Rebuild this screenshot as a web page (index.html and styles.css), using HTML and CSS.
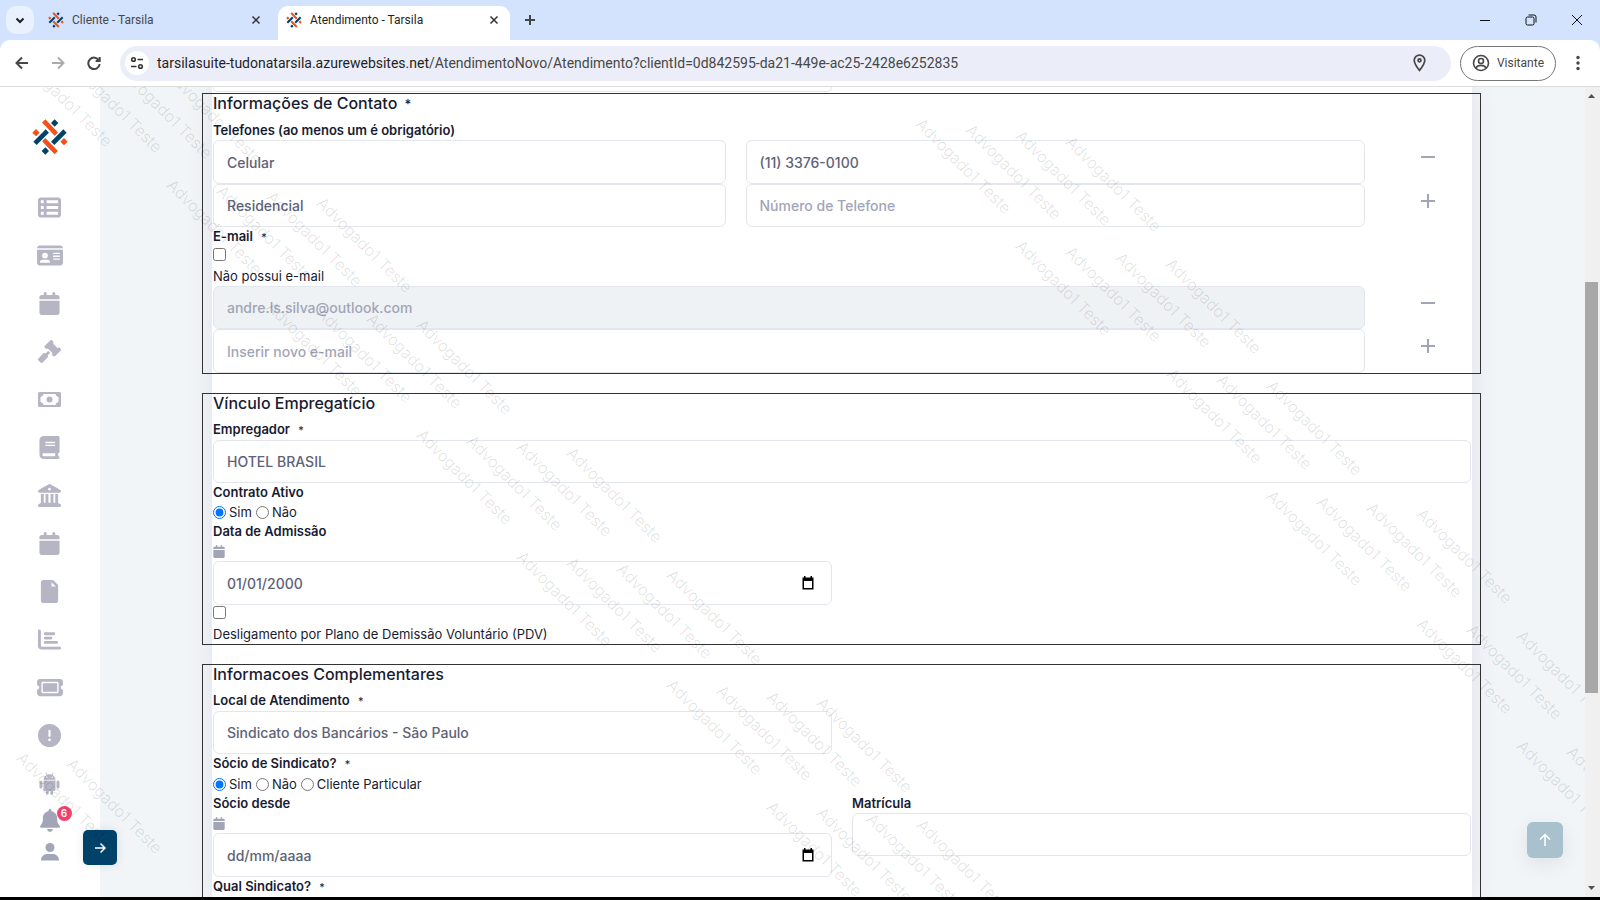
FILE: index.html
```html
<!DOCTYPE html>
<html lang="pt-BR">
<head>
<meta charset="utf-8">
<title>Atendimento - Tarsila</title>
<link rel="stylesheet" href="styles.css">
</head>
<body>
<svg class="defs" aria-hidden="true">
  <symbol id="logo" viewBox="35 28 108 108">
    <g stroke-width="14" stroke-linecap="square">
      <path class="logo-warm" d="M75 39L103 68M75 95L103 124"/>
      <path class="logo-cool" d="M49 96L76 69M102 96L129 69"/>
    </g>
    <path class="logo-cool-fill" d="M103 29l11 11-11 11-11-11zM75 113l11 11-11 11-11-11z"/>
    <path class="logo-warm-fill" d="M47 58l11 11-11 11-11-11zM131 85l11 11-11 11-11-11z"/>
  </symbol>
  <symbol id="calendar" viewBox="0 0 448 512"><path d="M96 32V64H48C21.500 64 0 85.500 0 112v48H448V112c0-26.500-21.500-48-48-48H352V32c0-17.700-14.300-32-32-32s-32 14.300-32 32V64H160V32c0-17.700-14.300-32-32-32S96 14.300 96 32zM448 192H0V464c0 26.500 21.500 48 48 48H400c26.500 0 48-21.500 48-48V192z"/></symbol>
</svg>
<div class="browser">
  <div class="tabstrip">
    <button class="tab-search" aria-label="Pesquisar guias"><svg viewBox="0 0 10 10"><path d="M1.500 3.500L5 7l3.500-3.500"/></svg></button>
    <div class="tab">
      <svg class="favicon"><use href="#logo"/></svg><span class="tab-title">Cliente - Tarsila</span>
      <button class="tab-close" aria-label="Fechar"><svg viewBox="0 0 10 10"><path d="M1.500 1.500l7 7M8.500 1.500l-7 7"/></svg></button>
    </div>
    <div class="tab tab-active">
      <svg class="favicon"><use href="#logo"/></svg><span class="tab-title">Atendimento - Tarsila</span>
      <button class="tab-close" aria-label="Fechar"><svg viewBox="0 0 10 10"><path d="M1.500 1.500l7 7M8.500 1.500l-7 7"/></svg></button>
    </div>
    <button class="tab-new" aria-label="Nova guia"><svg viewBox="0 0 12 12"><path d="M6 1v10M1 6h10"/></svg></button>
    <div class="window-buttons">
      <button aria-label="Minimizar"><svg viewBox="0 0 12 12"><path d="M1 6.500h10"/></svg></button>
      <button aria-label="Restaurar"><svg viewBox="0 0 12 12"><rect x="1" y="3" width="8" height="8" rx="1.500"/><path d="M3.500 1H9a2 2 0 0 1 2 2v5.500"/></svg></button>
      <button aria-label="Fechar janela"><svg viewBox="0 0 12 12"><path d="M1 1l10 10M11 1L1 11"/></svg></button>
    </div>
  </div>
  <div class="toolbar">
    <button class="tool" aria-label="Voltar"><svg viewBox="0 0 14 14"><path d="M13 7H2M7 1.500L1.500 7 7 12.500"/></svg></button>
    <button class="tool tool-off" aria-label="Avançar"><svg viewBox="0 0 14 14"><path d="M1 7h11M7 1.500L12.500 7 7 12.500"/></svg></button>
    <button class="tool" aria-label="Recarregar"><svg viewBox="0 0 14 14"><path d="M12 4.500A5.700 5.700 0 1 0 12.700 8M12.700 1v4H8.700"/></svg></button>
    <div class="omnibox">
      <button class="site-info" aria-label="Informações do site"><svg viewBox="0 0 14 14"><path d="M7.500 3.500H13M1 10.500h5.500"/><circle cx="3.500" cy="3.500" r="1.800"/><circle cx="10.500" cy="10.500" r="1.800"/></svg></button>
      <span class="url">tarsilasuite-tudonatarsila.azurewebsites.net<span class="url-path">/AtendimentoNovo/Atendimento?clientId=0d842595-da21-449e-ac25-2428e6252835</span></span>
      <button class="pin" aria-label="Localização"><svg viewBox="0 0 12 17"><path d="M6 1a5 5 0 0 0-5 5c0 3.500 5 9.500 5 9.500S11 9.500 11 6a5 5 0 0 0-5-5z"/><circle cx="6" cy="6" r="1.400"/></svg></button>
    </div>
    <button class="profile"><svg viewBox="0 0 18 18"><circle cx="9" cy="9" r="7.500"/><circle cx="9" cy="7" r="2.500"/><path d="M3.800 14c2-3.500 8.400-3.500 10.400 0"/></svg>Visitante</button>
    <button class="menu" aria-label="Menu"><svg viewBox="0 0 4 16"><circle cx="2" cy="2.500" r="1.700"/><circle cx="2" cy="8" r="1.700"/><circle cx="2" cy="13.500" r="1.700"/></svg></button>
  </div>
</div>

<div class="page">
  <aside class="sidebar">
    <a class="brand" href="#" aria-label="Tarsila"><svg><use href="#logo"/></svg></a>
    <nav class="nav">
      <a href="#" aria-label="Lista"><svg viewBox="0 0 512 512"><path d="M0 96C0 60.700 28.700 32 64 32H448c35.300 0 64 28.700 64 64V416c0 35.300-28.700 64-64 64H64c-35.300 0-64-28.700-64-64V96zm64 0v64h64V96H64zm384 0H192v64H448V96zM64 224v64h64V224H64zm384 0H192v64H448V224zM64 352v64h64V352H64zm384 0H192v64H448V352z"/></svg></a>
      <a href="#" aria-label="Clientes"><svg class="wide" viewBox="0 0 576 512"><path d="M0 96l576 0c0-35.300-28.700-64-64-64H64C28.700 32 0 60.700 0 96zm0 32V416c0 35.300 28.700 64 64 64H512c35.300 0 64-28.700 64-64V128H0zM64 405.300c0-29.500 23.900-53.300 53.300-53.300H234.700c29.500 0 53.300 23.900 53.300 53.300c0 5.900-4.800 10.700-10.700 10.700H74.700c-5.900 0-10.700-4.800-10.700-10.700zM176 192a64 64 0 1 1 0 128 64 64 0 1 1 0-128zm176 16c0-8.800 7.200-16 16-16H496c8.800 0 16 7.200 16 16s-7.200 16-16 16H368c-8.800 0-16-7.200-16-16zm0 64c0-8.800 7.200-16 16-16H496c8.800 0 16 7.200 16 16s-7.200 16-16 16H368c-8.800 0-16-7.200-16-16zm0 64c0-8.800 7.200-16 16-16H496c8.800 0 16 7.200 16 16s-7.200 16-16 16H368c-8.800 0-16-7.200-16-16z"/></svg></a>
      <a href="#" aria-label="Agenda"><svg><use href="#calendar"/></svg></a>
      <a href="#" aria-label="Processos"><svg viewBox="0 0 512 512"><path d="M318.600 9.400c-12.500-12.500-32.800-12.500-45.300 0l-120 120c-12.500 12.500-12.500 32.800 0 45.300l16 16c12.500 12.500 32.800 12.500 45.300 0l4-4L325.400 293.400l-4 4c-12.500 12.500-12.500 32.800 0 45.300l16 16c12.500 12.500 32.800 12.500 45.300 0l120-120c12.500-12.500 12.500-32.800 0-45.300l-16-16c-12.500-12.500-32.800-12.500-45.300 0l-4 4L330.600 74.600l4-4c12.500-12.500 12.500-32.800 0-45.300l-16-16zm-152 288c-12.500-12.500-32.800-12.500-45.300 0l-112 112c-12.500 12.500-12.500 32.800 0 45.300l48 48c12.500 12.500 32.800 12.500 45.300 0l112-112c12.500-12.500 12.500-32.800 0-45.300l-1.400-1.400L272 285.300 226.700 240 168 298.700l-1.400-1.400z"/></svg></a>
      <a href="#" aria-label="Financeiro"><svg viewBox="0 0 23 23"><path fill-rule="evenodd" d="M1.500 4h20A1.500 1.500 0 0 1 23 5.500v12a1.500 1.500 0 0 1-1.500 1.500h-20A1.500 1.500 0 0 1 0 17.500v-12A1.500 1.500 0 0 1 1.500 4zM5.500 6a3.500 3.500 0 0 1-3 3v5a3.500 3.500 0 0 1 3 3h12a3.500 3.500 0 0 1 3-3V9a3.500 3.500 0 0 1-3-3z"/><circle cx="11.500" cy="11.500" r="3"/></svg></a>
      <a href="#" aria-label="Livro"><svg viewBox="0 0 448 512"><path d="M96 0C43 0 0 43 0 96V416c0 53 43 96 96 96H384h32c17.700 0 32-14.300 32-32s-14.300-32-32-32V384c17.700 0 32-14.300 32-32V32c0-17.700-14.300-32-32-32H384 96zm0 384H352v64H96c-17.700 0-32-14.300-32-32s14.300-32 32-32zm32-240c0-8.800 7.200-16 16-16H336c8.800 0 16 7.200 16 16s-7.200 16-16 16H144c-8.800 0-16-7.200-16-16zm16 48H336c8.800 0 16 7.200 16 16s-7.200 16-16 16H144c-8.800 0-16-7.200-16-16s7.200-16 16-16z"/></svg></a>
      <a href="#" aria-label="Tribunal"><svg viewBox="0 0 512 512"><path d="M240.100 4.200c9.800-5.600 21.900-5.600 31.800 0l171.800 98.100L448 104l0 .9 47.900 27.400c12.600 7.200 18.800 22 15.100 36s-16.400 23.800-30.900 23.800H32c-14.500 0-27.200-9.800-30.900-23.800s2.500-28.800 15.100-36L64 104.900V104l4.400-1.600L240.100 4.200zM64 224h64V416h40V224h64V416h48V224h64V416h40V224h64V420.300c.6 .3 1.200 .7 1.800 1.100l48 32c11.700 7.800 17 22.400 12.900 35.900S494.100 512 480 512H32c-14.100 0-26.500-9.200-30.600-22.700s1.100-28.100 12.900-35.900l48-32c.6-.4 1.200-.7 1.800-1.100V224z"/><circle class="hole" cx="256" cy="116" r="30"/></svg></a>
      <a href="#" aria-label="Prazos"><svg><use href="#calendar"/></svg></a>
      <a href="#" aria-label="Documentos"><svg viewBox="0 0 384 512"><path d="M64 0H270L384 114V448a64 64 0 0 1-64 64H64a64 64 0 0 1-64-64V64A64 64 0 0 1 64 0z"/><path class="hole" d="M238 52v94h94z"/></svg></a>
      <a href="#" aria-label="Relatórios"><svg viewBox="0 0 512 512"><path d="M32 32c17.700 0 32 14.300 32 32V400c0 8.800 7.200 16 16 16H480c17.700 0 32 14.300 32 32s-14.300 32-32 32H80c-44.200 0-80-35.800-80-80V64C0 46.300 14.300 32 32 32zm96 96c0-17.700 14.300-32 32-32l192 0c17.700 0 32 14.300 32 32s-14.300 32-32 32H160c-17.700 0-32-14.300-32-32zm32 64H288c17.700 0 32 14.300 32 32s-14.300 32-32 32H160c-17.700 0-32-14.300-32-32s14.300-32 32-32zm0 96H416c17.700 0 32 14.300 32 32s-14.300 32-32 32H160c-17.700 0-32-14.300-32-32s14.300-32 32-32z"/></svg></a>
      <a href="#" aria-label="Chamados"><svg class="wide" viewBox="0 0 576 512"><path fill-rule="evenodd" d="M64 64C28.700 64 0 92.700 0 128v64c0 8.800 7.400 15.700 15.700 18.600C34.500 217.100 48 235 48 256s-13.500 38.900-32.300 45.400C7.400 304.300 0 311.200 0 320v64c0 35.300 28.700 64 64 64H512c35.300 0 64-28.700 64-64V320c0-8.800-7.400-15.700-15.700-18.600C541.500 294.900 528 277 528 256s13.500-38.900 32.300-45.400c8.300-2.900 15.700-9.800 15.700-18.600V128c0-35.300-28.700-64-64-64H64zM128 160H448V352H128zM96 160c0-17.700 14.300-32 32-32H448c17.700 0 32 14.300 32 32V352c0 17.700-14.300 32-32 32H128c-17.700 0-32-14.300-32-32V160z"/></svg></a>
      <a href="#" aria-label="Avisos"><svg viewBox="0 0 512 512"><path d="M256 512A256 256 0 1 0 256 0a256 256 0 1 0 0 512zm0-384c13.300 0 24 10.700 24 24V264c0 13.300-10.700 24-24 24s-24-10.700-24-24V152c0-13.300 10.700-24 24-24zM224 352a32 32 0 1 1 64 0 32 32 0 1 1 -64 0z"/></svg></a>
      <a href="#" aria-label="Robô"><svg viewBox="0 0 23 23"><path d="M5.500 7.700C5.500 5.500 7 3.700 8.700 2.900L7.500 1l.5-.4 1.300 2a7 7 0 0 1 4.400 0l1.300-2 .5.400-1.200 1.900c1.700.8 3.200 2.600 3.200 4.800zM5.500 8.500h12v9a1.500 1.500 0 0 1-1.500 1.500h-1v2.500a1.300 1.300 0 0 1-2.600 0V19h-1.800v2.500a1.300 1.300 0 0 1-2.600 0V19H7a1.500 1.500 0 0 1-1.500-1.500z"/><rect x="1.500" y="8.500" width="3" height="8" rx="1.500"/><rect x="18.500" y="8.500" width="3" height="8" rx="1.500"/><circle class="hole" cx="8.800" cy="5.200" r=".7"/><circle class="hole" cx="14.200" cy="5.200" r=".7"/></svg></a>
    </nav>
    <div class="account">
      <a class="bell" href="#" aria-label="Notificações"><svg viewBox="0 0 448 512"><path d="M224 0c-17.700 0-32 14.300-32 32V49.900C119.500 61.400 64 124.200 64 200v33.400c0 45.400-15.500 89.500-43.800 124.900L5.300 377c-5.800 7.200-6.900 17.100-2.900 25.400S14.800 416 24 416H424c9.200 0 17.600-5.300 21.600-13.600s2.900-18.200-2.900-25.400l-14.900-18.600C399.500 322.900 384 278.800 384 233.400V200c0-75.800-55.500-138.600-128-150.100V32c0-17.700-14.300-32-32-32zm64 448H224 160c0 17 6.700 33.300 18.700 45.300s28.300 18.700 45.300 18.700s33.300-6.700 45.300-18.700s18.700-28.300 18.700-45.300z"/></svg><span class="badge">6</span></a>
      <a class="user" href="#" aria-label="Perfil"><svg viewBox="0 0 18 18"><circle cx="9" cy="4.500" r="4.500"/><path d="M0 17.500c0-4 3-6.500 6-6.500h6c3 0 6 2.500 6 6.500z"/></svg></a>
    </div>
    <button class="expand" aria-label="Expandir menu"><svg viewBox="0 0 14 14"><path d="M2 7h10M7.500 2.500L12 7l-4.500 4.500"/></svg></button>
  </aside>

  <main class="main">
    <form class="card">
      <div class="row previous"><div class="col-6"><div class="field-end"></div></div></div>

      <section class="section">
        <h2>Informações de Contato <span class="req">*</span></h2>
        <div class="row">
          <p class="label col-12">Telefones (ao menos um é obrigatório)</p>
          <div class="col-5"><input class="field tall" aria-label="Tipo de telefone" value="Celular"></div>
          <div class="col-6"><input class="field tall" aria-label="Telefone" value="(11) 3376-0100"></div>
          <div class="col-1"><button class="icon-btn" type="button" aria-label="Remover telefone"><svg viewBox="0 0 14 14"><path d="M0 7h14"/></svg></button></div>
          <div class="col-5"><input class="field" aria-label="Tipo de telefone" value="Residencial"></div>
          <div class="col-6"><input class="field" aria-label="Telefone" placeholder="Número de Telefone"></div>
          <div class="col-1"><button class="icon-btn" type="button" aria-label="Adicionar telefone"><svg viewBox="0 0 14 14"><path d="M0 7h14M7 0v14"/></svg></button></div>
          <p class="label col-12">E-mail <span class="req">*</span></p>
          <div class="check col-12"><input type="checkbox" id="no-mail"><label for="no-mail">Não possui e-mail</label></div>
          <div class="col-11"><input class="field" aria-label="E-mail" value="andre.ls.silva@outlook.com" disabled></div>
          <div class="col-1"><button class="icon-btn" type="button" aria-label="Remover e-mail"><svg viewBox="0 0 14 14"><path d="M0 7h14"/></svg></button></div>
          <div class="col-11"><input class="field tall" aria-label="Novo e-mail" placeholder="Inserir novo e-mail"></div>
          <div class="col-1"><button class="icon-btn" type="button" aria-label="Adicionar e-mail"><svg viewBox="0 0 14 14"><path d="M0 7h14M7 0v14"/></svg></button></div>
        </div>
      </section>

      <section class="section">
        <h2>Vínculo Empregatício</h2>
        <div class="row">
          <div class="col-12"><label class="label" for="employer">Empregador <span class="req">*</span></label><input class="field" id="employer" value="HOTEL BRASIL"></div>
          <p class="label col-12">Contrato Ativo</p>
          <div class="radios col-12">
            <input type="radio" name="active" id="a1" checked><label for="a1">Sim</label>
            <input type="radio" name="active" id="a2"><label for="a2">Não</label>
          </div>
          <div class="col-6">
            <label class="label" for="admission">Data de Admissão</label>
            <div class="date-icon"><svg><use href="#calendar"/></svg></div>
            <div class="field tall date"><input id="admission" value="01/01/2000"><svg viewBox="0 0 14 14"><path fill-rule="evenodd" d="M3 0h1.500v1.500h5V0H11v1.500h1.500v12h-11v-12H3zM3 5v7h8V5z"/></svg></div>
          </div>
          <div class="check col-12"><input type="checkbox" id="pdv"><label for="pdv">Desligamento por Plano de Demissão Voluntário (PDV)</label></div>
        </div>
      </section>

      <section class="section">
        <h2>Informacoes Complementares</h2>
        <div class="row">
          <div class="col-6"><label class="label" for="place">Local de Atendimento <span class="req">*</span></label><input class="field" id="place" value="Sindicato dos Bancários - São Paulo"></div>
          <p class="label col-12">Sócio de Sindicato? <span class="req">*</span></p>
          <div class="radios col-12">
            <input type="radio" name="member" id="m1" checked><label for="m1">Sim</label>
            <input type="radio" name="member" id="m2"><label for="m2">Não</label>
            <input type="radio" name="member" id="m3"><label for="m3">Cliente Particular</label>
          </div>
          <div class="col-6">
            <label class="label" for="since">Sócio desde</label>
            <div class="date-icon"><svg><use href="#calendar"/></svg></div>
            <div class="field tall date"><input id="since" value="dd/mm/aaaa"><svg viewBox="0 0 14 14"><path fill-rule="evenodd" d="M3 0h1.500v1.500h5V0H11v1.500h1.500v12h-11v-12H3zM3 5v7h8V5z"/></svg></div>
          </div>
          <div class="col-6"><label class="label" for="enroll">Matrícula</label><input class="field" id="enroll"></div>
          <div class="col-12"><label class="label" for="union">Qual Sindicato? <span class="req">*</span></label><input class="field" id="union"></div>
        </div>
      </section>
    </form>
    <button class="to-top" aria-label="Voltar ao topo"><svg viewBox="0 0 14 14"><path d="M7 13V2M2 6.500L7 1.500l5 5"/></svg></button>
  </main>

  <div class="scrollbar" aria-hidden="true"><svg viewBox="0 0 7 4"><path d="M0 4L3.500 0 7 4z"/></svg><span class="thumb"></span><svg class="down" viewBox="0 0 7 4"><path d="M0 0L3.500 4 7 0z"/></svg></div>

  <div class="watermark" id="watermark" aria-hidden="true"></div>
</div>
<script src="watermark.js"></script>
</body>
</html>
```
FILE: watermark.js
```js
// Each entry: left, top and count of a run of diagonal labels.
const runs = [
  [13, -46, 4], [163, 82, 4], [263, 204, 4], [413, 332, 4], [513, 454, 4],
  [663, 582, 4], [763, 704, 4], [912, 21, 4], [1012, 143, 4], [1163, 271, 3],
  [1263, 393, 4], [1413, 521, 3], [1513, 643, 2], [13, 655, 2]
];
const layer = document.getElementById("watermark");
for (const [x, y, count] of runs) {
  for (let i = 0; i < count; i++) {
    const mark = document.createElement("span");
    mark.textContent = "Advogado1 Teste";
    mark.style.left = x + i * 50 + "px";
    mark.style.top = y + i * 6 + "px";
    layer.append(mark);
  }
}
```
FILE: styles.css
```css
* { box-sizing: border-box; }
body {
  margin: 0;
  height: 100vh;
  display: flex;
  flex-direction: column;
  overflow: hidden;
  border-bottom: 3px solid #000;
  background: #fff;
  font-family: Inter, sans-serif;
  font-size: 13px;
  color: #181c32;
}
button { border: 0; padding: 0; background: none; font: inherit; color: inherit; display: flex; align-items: center; justify-content: center; }
p, h2 { margin: 0; }
input { font: inherit; }
.defs { position: absolute; width: 0; height: 0; }
.logo-warm { stroke: #f1511b; }
.logo-cool { stroke: #00426a; }
.logo-warm-fill { fill: #f1511b; }
.logo-cool-fill { fill: #00426a; }

/* Browser chrome */
.browser { flex: none; font-family: Roboto, "Open Sans", sans-serif; background: #d3e3fd; border-bottom: 1px solid #dcdcdc; }
.tabstrip { display: flex; align-items: center; height: 40px; padding-left: 6px; }
.tab-search { width: 28px; height: 28px; border-radius: 10px; background: #e9f1fe; }
.tab-search svg { width: 10px; height: 10px; fill: none; stroke: #1f1f1f; stroke-width: 2; }
.tab { display: flex; align-items: center; align-self: flex-end; gap: 8px; height: 34px; width: 232px; margin-left: 6px; padding: 0 11px 6px 8px; color: #474747; }
.tab:first-of-type { width: 238px; padding-right: 17px; }
.tab-active { margin-left: 0; background: #fff; border-radius: 10px 10px 0 0; color: #1f1f1f; }
.favicon { width: 16px; height: 16px; flex: none; }
.tab-title { flex: 1; font-size: 12px; line-height: 16px; white-space: nowrap; }
.tab-close svg { width: 10px; height: 10px; fill: none; stroke: #333; stroke-width: 1.500; }
.tab-new { width: 28px; height: 28px; margin-left: 6px; }
.tab-new svg { width: 12px; height: 12px; stroke: #444; stroke-width: 2; }
.window-buttons { display: flex; margin-left: auto; }
.window-buttons button { width: 46px; height: 40px; }
.window-buttons svg { width: 12px; height: 12px; fill: none; stroke: #111; stroke-width: 1; }
.toolbar { display: flex; align-items: center; height: 46px; padding: 0 20px 0 4px; background: #fff; border-radius: 10px 10px 0 0; }
.tool { width: 36px; height: 36px; }
.tool svg { width: 14px; height: 14px; fill: none; stroke: #474747; stroke-width: 2; }
.tool-off { opacity: .45; }
.omnibox { flex: 1; display: flex; align-items: center; height: 35px; margin: 0 9px 0 8px; padding: 0 25px 0 5px; border-radius: 18px; background: #ebeef8; }
.site-info { width: 24px; height: 24px; border-radius: 50%; background: #fff; }
.site-info svg { width: 14px; height: 14px; fill: none; stroke: #333; stroke-width: 1.600; }
.url { flex: 1; margin-left: 8px; font-size: 14px; line-height: 20px; color: #1f1f1f; }
.url-path { color: #474747; }
.pin svg { width: 13px; height: 18px; fill: none; stroke: #474747; stroke-width: 1.600; }
.profile { gap: 7px; height: 35px; padding: 0 11px; border: 1px solid #747775; border-radius: 18px; font-size: 12px; color: #474747; }
.profile svg { width: 18px; height: 18px; fill: none; stroke: #474747; stroke-width: 1.600; }
.menu { margin-left: 20px; }
.menu svg { width: 4px; height: 16px; fill: #474747; }

/* Page shell */
.page { position: relative; flex: 1; min-height: 0; display: flex; overflow: hidden; }
.sidebar { position: relative; flex: none; width: 100px; display: flex; flex-direction: column; align-items: center; padding-right: 1px; background: #fff; }
.brand { margin-top: 32px; height: 36px; }
.brand svg { width: 36px; height: 36px; }
.nav { display: flex; flex-direction: column; margin-top: 28px; }
.nav a { display: flex; align-items: center; justify-content: center; height: 48px; }
.nav svg { width: 23px; height: 23px; fill: #b5b5c3; }
.nav .wide { width: 26px; }
.nav .hole { fill: #fff; }
.account { display: flex; flex-direction: column; align-items: center; }
.account svg { fill: #a1a5b7; display: block; }
.bell { position: relative; margin-top: 2px; }
.bell svg { width: 20px; height: 23px; }
.badge { position: absolute; left: 17px; top: -3px; width: 15px; height: 15px; border-radius: 50%; background: #f1416c; color: #fff; font-size: 10px; font-weight: 600; line-height: 15px; text-align: center; }
.user { margin-top: 11px; }
.user svg { width: 18px; height: 18px; }
.expand { position: absolute; right: -17px; bottom: 32px; width: 34px; height: 35px; border-radius: 5px; background: #00426a; box-shadow: 0 0 10px rgba(0, 0, 0, .1); }
.expand svg, .to-top svg { width: 14px; height: 14px; fill: none; stroke: #fff; stroke-width: 1.500; }
.main { flex: 1; min-width: 0; padding: 0 113px 0 112px; background: #f1f5f8; }
.card { height: 100%; background: #fff; box-shadow: 0 0 24px rgba(82, 63, 105, .1); }
.to-top { position: absolute; right: 37px; bottom: 39px; width: 36px; height: 36px; border-radius: 6px; background: #a9c0cd; box-shadow: 0 6px 20px rgba(0, 0, 0, .08); }
.scrollbar { flex: none; width: 15px; display: flex; flex-direction: column; align-items: center; padding: 7px 2px 7px 0; background: #f0f0f0; }
.scrollbar svg { width: 7px; height: 4px; fill: #505050; }
.scrollbar .thumb { width: 13px; height: 411px; margin-top: 184px; background: #a8a8a8; }
.scrollbar .down { margin-top: auto; }

/* Form */
.card > .previous { margin: 0 -9px; }
.field-end { height: 5px; margin-bottom: 1px; border: 1px solid #e4e6ef; border-top: 0; border-radius: 0 0 6px 6px; }
.section { margin: 0 -9px 19px -10px; border: 1px solid #333; }
h2 { padding: 0 10px; margin-bottom: 7px; font-size: 16px; font-weight: 500; line-height: 19px; }
.req { margin-left: 5px; font-size: 11px; font-weight: 400; }
h2 .req { margin-left: 3px; font-size: 13px; font-weight: 500; }
.row { display: grid; grid-template-columns: repeat(12, minmax(0, 1fr)); margin-right: -1px; }
.row > * { padding: 0 10px; }
.col-1 { grid-column: span 1; }
.col-5 { grid-column: span 5; }
.col-6 { grid-column: span 6; }
.col-11 { grid-column: span 11; }
.col-12 { grid-column: span 12; }
.label { display: block; font-weight: 600; line-height: 19px; }
.field { display: block; width: 100%; height: 43px; padding: 0 12px 0 13px; border: 1px solid #e4e6ef; border-radius: 6px; background: #fff; font-size: 14px; font-weight: 500; color: #5e6278; }
.field::placeholder { color: #a1a5b7; opacity: 1; }
.field:disabled { background: #eff2f5; color: #a1a5b7; }
.tall { height: 44px; }
.icon-btn { width: 100%; height: 34px; }
.icon-btn svg { width: 14px; height: 14px; stroke: #a1a5b7; stroke-width: 2; }
.check input, .radios input { display: block; width: 13px; height: 13px; margin: 0; }
.check input { margin: 1px 0 5px; }
.check label { display: block; line-height: 20px; }
.radios { display: flex; align-items: center; gap: 3px; height: 20px; }
.radios label + input { margin-left: 1px; }
.date-icon { height: 20px; padding-top: 4px; }
.date-icon svg { display: block; width: 12px; height: 13px; fill: #a1a5b7; }
.date { display: flex; align-items: center; padding-right: 16px; }
.date input { flex: 1; min-width: 0; border: 0; padding: 0; background: none; color: inherit; }
.date svg { width: 14px; height: 14px; fill: #000; }

/* Diagonal user name over the page */
.watermark { position: absolute; inset: 0 15px 0 0; overflow: hidden; pointer-events: none; }
.watermark span { position: absolute; transform-origin: 0 100%; transform: rotate(45deg); font-size: 16px; font-weight: 300; line-height: 20px; white-space: nowrap; color: rgba(0, 0, 0, .13); }
```
